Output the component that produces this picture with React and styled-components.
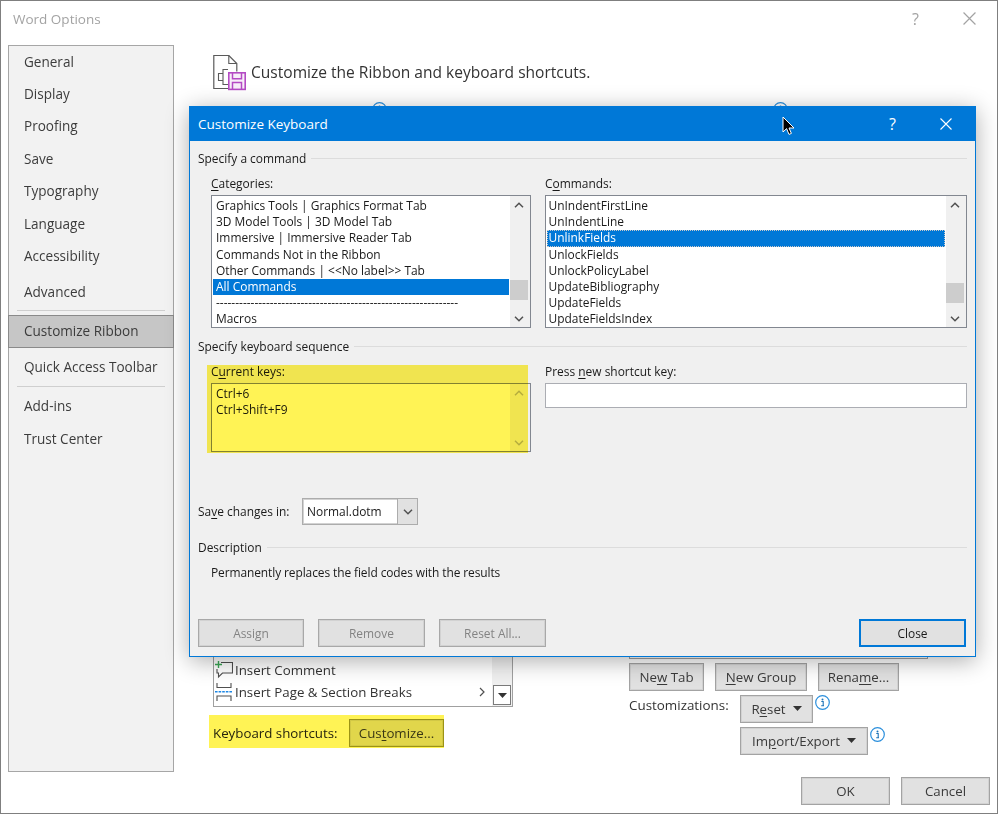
import styled, { createGlobalStyle } from 'styled-components';

const GlobalStyle = createGlobalStyle`
  html, body {
    margin: 0;
    background: #ffffff;
  }
  body {
    font-family: "Open Sans", "Noto Sans", sans-serif;
    overflow: hidden;
  }
  * {
    box-sizing: border-box;
  }
  u {
    text-underline-offset: 2px;
  }
`;

const Window = styled.div`
  position: relative;
  width: 998px;
  height: 814px;
  border: 1px solid #7f7f7f;
  display: flex;
  flex-direction: column;
  background: #ffffff;
  overflow: hidden;
`;

const TitleBar = styled.div`
  height: 44px;
  padding: 0 21px 9px 12px;
  display: flex;
  align-items: center;
  color: #a3a3a3;
`;

const WindowTitle = styled.div`
  flex: 1;
  font-size: 13.5px;
`;

const HelpMark = styled.span`
  font-size: 16px;
  color: ${p => p.$color};
  margin-right: ${p => p.$gap}px;
`;

const Content = styled.div`
  height: 727px;
  display: flex;
`;

const Sidebar = styled.nav`
  width: 166px;
  margin-left: 7px;
  background: #f2f2f2;
  border: 1px solid #a6a6a6;
`;

const NavItem = styled.div`
  height: ${p => (p.$active ? '33px' : '32.4px')};
  margin-top: ${p => p.$top || 0}px;
  padding: 0 0 1px 15px;
  display: flex;
  align-items: center;
  font-size: 13.55px;
  color: #3c3c3c;
  ${p => p.$active && 'background: #c6c6c6; border: 1px solid #8a8a8a; margin-left: -1px; margin-right: -1px;'}
`;

const NavDivider = styled.div`
  height: 1px;
  margin: ${p => p.$top}px 8px ${p => p.$bottom}px;
  background: #cfcfcf;
`;

const Main = styled.main`
  flex: 1;
  padding: 10px 0 0 39px;
  display: flex;
  flex-direction: column;
`;

const PageHeading = styled.div`
  height: 35px;
  display: flex;
  align-items: center;
  gap: 5px;
  font-size: 15.55px;
  color: #333333;
`;

const HeadingText = styled.span`
  margin-bottom: 2px;
`;

const InfoRow = styled.div`
  margin-top: 12px;
  padding-left: 159px;
  display: flex;
  gap: 386px;
`;

const Columns = styled.div`
  margin-top: 8px;
  display: grid;
  grid-template-columns: 300px 299px;
  column-gap: 116px;
  align-items: start;
`;

const RibbonList = styled.div`
  position: relative;
  height: ${p => p.$height}px;
  border: 1px solid #a0a0a0;
  padding: 0 0 3px 1px;
  display: flex;
  flex-direction: column;
  justify-content: flex-end;
`;

const RibbonTrack = styled.div`
  position: absolute;
  top: 0;
  right: 0;
  bottom: 0;
  width: 20px;
  background: #f0f0f0;
  display: flex;
  align-items: flex-end;
  justify-content: center;
  padding-bottom: 1px;
`;

const RibbonRow = styled.div`
  height: 22px;
  display: flex;
  align-items: center;
  gap: 2px;
  font-size: 13.3px;
  color: #333333;
`;

const MoreMark = styled.svg`
  position: absolute;
  right: 27px;
  bottom: 9px;
`;

const MoreButton = styled.div`
  width: 18px;
  height: 20px;
  background: #ffffff;
  border: 1px solid #7a7a7a;
  display: flex;
  align-items: center;
  justify-content: center;
`;

const Highlighted = styled.div`
  position: relative;
  &::after {
    content: '';
    position: absolute;
    left: ${p => p.$left}px;
    top: ${p => p.$top}px;
    right: ${p => p.$right}px;
    bottom: ${p => p.$bottom}px;
    background: #fff355;
    mix-blend-mode: multiply;
    pointer-events: none;
  }
`;

const ShortcutRow = styled(Highlighted)`
  width: 231px;
  height: 33px;
  margin-top: 8px;
  display: flex;
  align-items: center;
  justify-content: space-between;
  font-size: 13.3px;
  color: #262626;
  padding-top: 3px;
`;

const OptionButton = styled.div`
  width: ${p => p.$width}px;
  height: 28px;
  flex: none;
  background: #e1e1e1;
  border: 1px solid #a3a3a3;
  box-shadow: inset 0 0 0 1px #d2d2d2;
  padding-bottom: 1px;
  display: flex;
  align-items: center;
  justify-content: center;
  gap: 7px;
  font-size: 13.3px;
  color: #3a3a3a;
`;

const TallButton = styled(OptionButton)`
  border-color: #9c9a3c;
`;

const ButtonRow = styled.div`
  margin-top: 4px;
  display: flex;
  gap: ${p => p.$gap}px;
`;

const CustomGrid = styled.div`
  margin-top: 4px;
  display: grid;
  grid-template-columns: 111px auto;
  row-gap: 4px;
  font-size: 13.4px;
  color: #333333;
`;

const CustomLabel = styled.div`
  line-height: 21px;
`;

const CustomCell = styled.div`
  grid-column: 2;
  display: flex;
  align-items: flex-start;
  gap: 2px;
`;

const Footer = styled.div`
  padding: 5px 7px 0 0;
  display: flex;
  justify-content: flex-end;
  gap: 11px;
`;

const Dialog = styled.section`
  position: absolute;
  left: 188px;
  top: 105px;
  width: 787px;
  height: 551px;
  border: 1px solid #0078d7;
  background: #f0f0f0;
  box-shadow: 0 4px 22px rgba(0, 0, 0, 0.32);
  display: flex;
  flex-direction: column;
  color: #1a1a1a;
  font-size: 11.95px;
`;

const DialogTitle = styled.div`
  height: 35px;
  margin: -1px -1px 0;
  padding: 0 24px 0 9px;
  background: #0078d7;
  color: #ffffff;
  display: flex;
  align-items: center;
`;

const DialogBody = styled.div`
  flex: 1;
  padding: 10px 8px 9px;
  display: flex;
  flex-direction: column;
`;

const GroupHeading = styled.div`
  margin-top: ${p => p.$top || 0}px;
  height: 16px;
  line-height: 16px;
  display: flex;
  align-items: center;
  gap: 5px;
  white-space: nowrap;
  &::after {
    content: '';
    flex: 1;
    height: 1px;
    margin-top: -2px;
    background: #dcdcdc;
  }
`;

const FieldGrid = styled.div`
  margin-top: 9px;
  padding-left: 13px;
  display: grid;
  grid-template-columns: 320px 422px;
  column-gap: 14px;
`;

const Field = styled.div`
  display: flex;
  flex-direction: column;
`;

const HighlightField = styled(Highlighted)`
  display: flex;
  flex-direction: column;
`;

const FieldLabel = styled.label`
  height: 16px;
  line-height: 16px;
  margin-bottom: 3px;
`;

const ListBox = styled.div`
  height: ${p => p.$height}px;
  background: #ffffff;
  border: 1px solid #828790;
  display: flex;
`;

const ListRows = styled.div`
  flex: 1;
  min-width: 0;
  padding: 2px 1px 0;
  overflow: hidden;
`;

const ListRow = styled.div`
  height: 16.2px;
  line-height: 16.4px;
  padding-left: ${p => p.$inset ?? 3}px;
  white-space: nowrap;
  ${p => p.$selected && 'background: #0078d7; color: #ffffff;'}
  ${p => p.$focused && 'outline: 1px dotted #c9c9c9; outline-offset: -1px;'}
`;

const ScrollBar = styled.div`
  width: 20px;
  flex: none;
  padding-right: 2px;
  background: #f0f0f0;
  display: flex;
  flex-direction: column;
  align-items: center;
`;

const ScrollArrow = styled.div`
  width: 100%;
  height: 17px;
  flex: none;
  display: flex;
  align-items: center;
  justify-content: center;
`;

const ScrollTrack = styled.div`
  flex: 1;
  width: 100%;
`;

const ScrollThumb = styled.div`
  margin-top: ${p => p.$top}px;
  height: 20px;
  background: #cdcdcd;
`;

const TextInput = styled.div`
  height: 25px;
  background: #ffffff;
  border: 1px solid #abadb3;
`;

const SaveRow = styled.div`
  margin-top: 46px;
  height: 27px;
  display: flex;
  align-items: center;
`;

const SaveLabel = styled.label`
  width: 104px;
`;

const ComboBox = styled.div`
  width: 116px;
  height: 27px;
  background: #ffffff;
  border: 1px solid #acacac;
  box-shadow: 0 0 0 1px #d2d2d2 inset;
  display: flex;
  align-items: center;
  padding-left: 4px;
`;

const ComboText = styled.span`
  flex: 1;
`;

const ComboArrow = styled.div`
  width: 20px;
  height: 100%;
  background: #e1e1e1;
  border-left: 1px solid #acacac;
  display: flex;
  align-items: center;
  justify-content: center;
`;

const DescriptionText = styled.div`
  margin-top: 9px;
  padding-left: 13px;
  line-height: 16px;
  letter-spacing: -0.09px;
`;

const DialogButtons = styled.div`
  margin-top: auto;
  padding-right: 1px;
  display: flex;
  gap: 14px;
`;

const DialogButton = styled.div`
  width: ${p => p.$width}px;
  height: 28px;
  margin-left: ${p => (p.$push ? 'auto' : '0')};
  background: #e1e1e1;
  border: ${p => (p.$primary ? '2px solid #0078d7' : '1px solid #a8a8a8')};
  box-shadow: ${p => (p.$primary ? 'none' : 'inset 0 0 0 1px #d2d2d2')};
  color: ${p => (p.$primary ? '#1a1a1a' : '#838383')};
  display: flex;
  align-items: center;
  justify-content: center;
`;

const Cursor = styled.svg`
  position: absolute;
  left: 781px;
  top: 115px;
`;

const CATEGORIES = [
  'Graphics Tools | Graphics Format Tab',
  '3D Model Tools | 3D Model Tab',
  'Immersive | Immersive Reader Tab',
  'Commands Not in the Ribbon',
  'Other Commands | <<No label>> Tab',
  'All Commands',
  '---------------------------------------------------------------',
  'Macros',
];

const COMMANDS = [
  'UnIndentFirstLine',
  'UnIndentLine',
  'UnlinkFields',
  'UnlockFields',
  'UnlockPolicyLabel',
  'UpdateBibliography',
  'UpdateFields',
  'UpdateFieldsIndex',
];

const CloseIcon = ({ size, color }) => (
  <svg width={size} height={size} viewBox="0 0 12 12">
    <path d="M.5.5l11 11M11.5.5l-11 11" stroke={color} strokeWidth="1.1" fill="none" />
  </svg>
);

const Chevron = ({ up, color = '#505050' }) => (
  <svg width="10" height="6" viewBox="0 0 10 6">
    <path d={up ? 'M1 5.2L5 1.2l4 4' : 'M1 .8l4 4 4-4'} stroke={color} strokeWidth="1.5" fill="none" />
  </svg>
);

const Caret = () => (
  <svg width="9" height="5" viewBox="0 0 9 5">
    <path d="M0 0h9L4.5 5z" fill="#333333" />
  </svg>
);

const InfoIcon = () => (
  <svg width="15" height="15" viewBox="0 0 15 15">
    <circle cx="7.5" cy="7.5" r="6.8" fill="#ffffff" stroke="#2b8fdc" strokeWidth="1.2" />
    <circle cx="7.5" cy="4.4" r="1" fill="#1f74b8" />
    <path d="M6.3 6.5h1.9v4.2M6.2 10.8h2.8" stroke="#1f74b8" strokeWidth="1.1" fill="none" />
  </svg>
);

const RibbonIcon = () => (
  <svg width="33" height="36" viewBox="0 0 33 36">
    <path d="M15 33.5H.8V.5h15l8 8v8" stroke="#5a5a5a" strokeWidth="1.2" fill="none" />
    <path d="M15.8.5v8h8" stroke="#5a5a5a" strokeWidth="1.1" fill="none" />
    <path d="M15 14.5h-5v4H5.5v7H10v4h5M10 18.5v7" stroke="#5a5a5a" strokeWidth="1.1" fill="none" />
    <rect x="15.8" y="17.8" width="16.4" height="16.6" fill="#f8eef9" stroke="#b44bc4" strokeWidth="1.6" />
    <path d="M19.5 17.8v6h9v-6M19.5 34.4v-7h9v7" stroke="#b44bc4" strokeWidth="1.5" fill="none" />
  </svg>
);

const CommentIcon = () => (
  <svg width="18" height="18" viewBox="0 0 18 18">
    <path d="M6 1.5h11.5V12H7.5L3.5 16v-4H2V8" stroke="#4f4f4f" strokeWidth="1.1" fill="none" />
    <path d="M3.5 0v7M0 3.5h7" stroke="#3aa655" strokeWidth="1.4" fill="none" />
  </svg>
);

const BreakIcon = () => (
  <svg width="18" height="18" viewBox="0 0 18 18">
    <path d="M2 0v4.5h14V0M2 18v-5h14v5" stroke="#4f4f4f" strokeWidth="1.1" fill="none" />
    <path d="M0 8.75h18" stroke="#1e88e5" strokeWidth="1.5" strokeDasharray="2.6 1" fill="none" />
  </svg>
);

const App = () => (
  <>
    <GlobalStyle />
    <Window>
      <TitleBar>
        <WindowTitle>Word Options</WindowTitle>
        <HelpMark $color="#a3a3a3" $gap={44}>?</HelpMark>
        <CloseIcon size={13} color="#a3a3a3" />
      </TitleBar>

      <Content>
        <Sidebar>
          <NavItem>General</NavItem>
          <NavItem>Display</NavItem>
          <NavItem>Proofing</NavItem>
          <NavItem>Save</NavItem>
          <NavItem>Typography</NavItem>
          <NavItem>Language</NavItem>
          <NavItem>Accessibility</NavItem>
          <NavItem $top={3.5}>Advanced</NavItem>
          <NavDivider $top={1.5} $bottom={4} />
          <NavItem $active>Customize Ribbon</NavItem>
          <NavItem $top={3.5}>Quick Access Toolbar</NavItem>
          <NavDivider $top={1.5} $bottom={4} />
          <NavItem>Add-ins</NavItem>
          <NavItem>Trust Center</NavItem>
        </Sidebar>

        <Main>
          <PageHeading>
            <RibbonIcon />
            <HeadingText>Customize the Ribbon and keyboard shortcuts.</HeadingText>
          </PageHeading>
          <InfoRow>
            <InfoIcon />
            <InfoIcon />
          </InfoRow>

          <Columns>
            <div>
              <RibbonList $height={582}>
                <RibbonTrack>
                  <MoreButton><Caret /></MoreButton>
                </RibbonTrack>
                <RibbonRow><CommentIcon /><span>Insert Comment</span></RibbonRow>
                <RibbonRow><BreakIcon /><span>Insert Page &amp; Section Breaks</span></RibbonRow>
                <MoreMark width="6" height="10" viewBox="0 0 6 10">
                  <path d="M1 1l4 4-4 4" stroke="#505050" strokeWidth="1.2" fill="none" />
                </MoreMark>
              </RibbonList>
              <ShortcutRow $left={-4} $top={0} $right={0} $bottom={0}>
                <span>Keyboard shortcuts:</span>
                <TallButton $width={95}><span>Cus<u>t</u>omize...</span></TallButton>
              </ShortcutRow>
            </div>

            <div>
              <RibbonList $height={534} />
              <ButtonRow $gap={11}>
                <OptionButton $width={75}><span>Ne<u>w</u> Tab</span></OptionButton>
                <OptionButton $width={92}><span><u>N</u>ew Group</span></OptionButton>
                <OptionButton $width={81}><span>Rena<u>m</u>e...</span></OptionButton>
              </ButtonRow>
              <CustomGrid>
                <CustomLabel>Customizations:</CustomLabel>
                <CustomCell>
                  <OptionButton $width={73}><span>R<u>e</u>set</span><Caret /></OptionButton>
                  <InfoIcon />
                </CustomCell>
                <CustomCell>
                  <OptionButton $width={128}><span>Im<u>p</u>ort/Export</span><Caret /></OptionButton>
                  <InfoIcon />
                </CustomCell>
              </CustomGrid>
            </div>
          </Columns>
        </Main>
      </Content>

      <Footer>
        <OptionButton $width={89}>OK</OptionButton>
        <OptionButton $width={89}>Cancel</OptionButton>
      </Footer>

      <Dialog>
        <DialogTitle>
          <WindowTitle>Customize Keyboard</WindowTitle>
          <HelpMark $color="#ffffff" $gap={44}>?</HelpMark>
          <CloseIcon size={12} color="#ffffff" />
        </DialogTitle>

        <DialogBody>
          <GroupHeading>Specify a command</GroupHeading>
          <FieldGrid>
            <Field>
              <FieldLabel><u>C</u>ategories:</FieldLabel>
              <ListBox $height={133}>
                <ListRows>
                  {CATEGORIES.map(name => (
                    <ListRow key={name} $selected={name === 'All Commands'}>{name}</ListRow>
                  ))}
                </ListRows>
                <ScrollBar>
                  <ScrollArrow><Chevron up /></ScrollArrow>
                  <ScrollTrack><ScrollThumb $top={67} /></ScrollTrack>
                  <ScrollArrow><Chevron /></ScrollArrow>
                </ScrollBar>
              </ListBox>
            </Field>
            <Field>
              <FieldLabel>C<u>o</u>mmands:</FieldLabel>
              <ListBox $height={133}>
                <ListRows>
                  {COMMANDS.map(name => (
                    <ListRow
                      key={name}
                      $inset={1.5}
                      $selected={name === 'UnlinkFields'}
                      $focused={name === 'UnlinkFields'}
                    >
                      {name}
                    </ListRow>
                  ))}
                </ListRows>
                <ScrollBar>
                  <ScrollArrow><Chevron up /></ScrollArrow>
                  <ScrollTrack><ScrollThumb $top={70} /></ScrollTrack>
                  <ScrollArrow><Chevron /></ScrollArrow>
                </ScrollBar>
              </ListBox>
            </Field>
          </FieldGrid>

          <GroupHeading $top={11}>Specify keyboard sequence</GroupHeading>
          <FieldGrid>
            <HighlightField $left={-4} $top={1} $right={3} $bottom={-1}>
              <FieldLabel>C<u>u</u>rrent keys:</FieldLabel>
              <ListBox $height={69}>
                <ListRows>
                  <ListRow>Ctrl+6</ListRow>
                  <ListRow>Ctrl+Shift+F9</ListRow>
                </ListRows>
                <ScrollBar>
                  <ScrollArrow><Chevron up color="#b5b5b5" /></ScrollArrow>
                  <ScrollTrack />
                  <ScrollArrow><Chevron color="#b5b5b5" /></ScrollArrow>
                </ScrollBar>
              </ListBox>
            </HighlightField>
            <Field>
              <FieldLabel>Press <u>n</u>ew shortcut key:</FieldLabel>
              <TextInput />
            </Field>
          </FieldGrid>

          <SaveRow>
            <SaveLabel>Sa<u>v</u>e changes in:</SaveLabel>
            <ComboBox>
              <ComboText>Normal.dotm</ComboText>
              <ComboArrow><Chevron /></ComboArrow>
            </ComboBox>
          </SaveRow>

          <GroupHeading $top={15}>Description</GroupHeading>
          <DescriptionText>Permanently replaces the field codes with the results</DescriptionText>

          <DialogButtons>
            <DialogButton $width={106}>Assign</DialogButton>
            <DialogButton $width={107}>Remove</DialogButton>
            <DialogButton $width={107}>Reset All...</DialogButton>
            <DialogButton $width={107} $push $primary>Close</DialogButton>
          </DialogButtons>
        </DialogBody>
      </Dialog>

      <Cursor width="13" height="20" viewBox="0 0 13 20">
        <path d="M1 1v15l3.6-3.4L7 18.4l2.4-1-2.4-5.4h5z" fill="#000000" stroke="#ffffff" strokeWidth="1" />
      </Cursor>
    </Window>
  </>
);

export default App;
